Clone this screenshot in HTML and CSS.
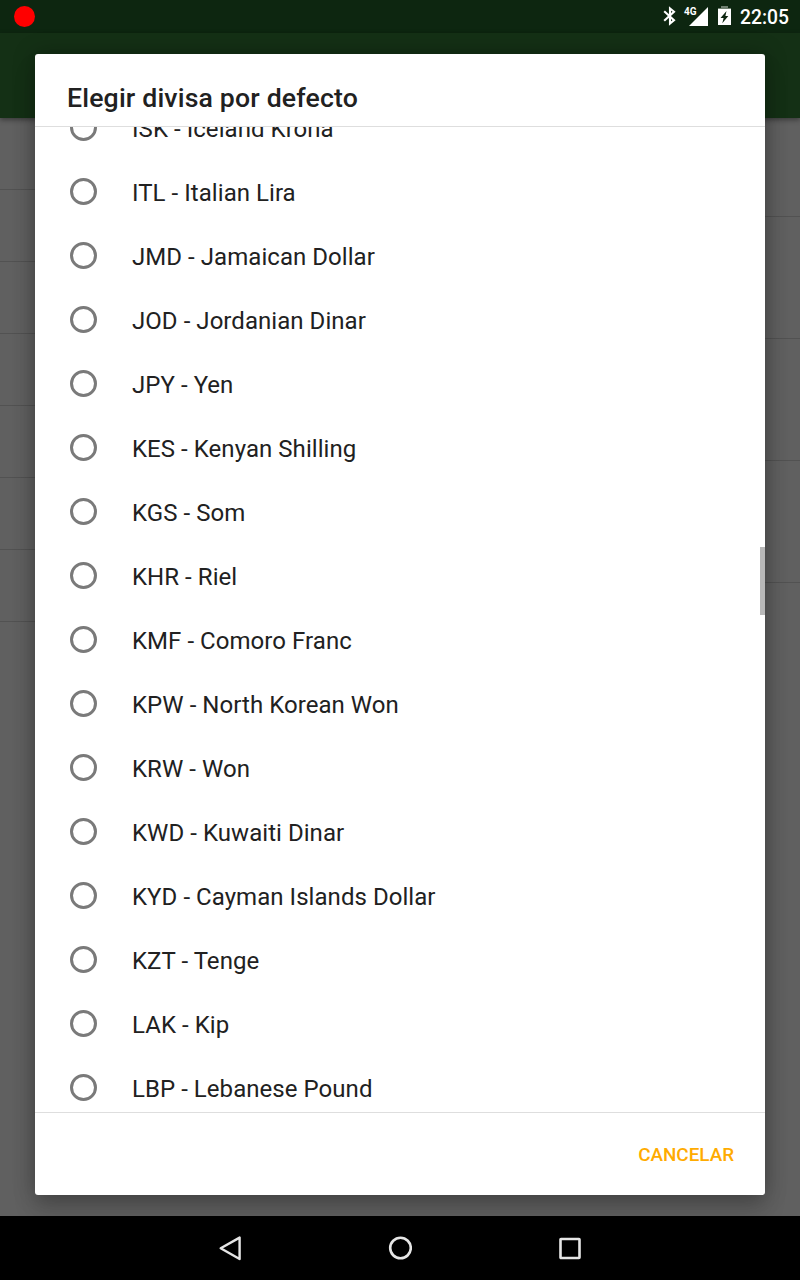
FILE: index.html
```html
<!DOCTYPE html>
<html lang="es">
<head>
<meta charset="utf-8">
<title>Elegir divisa por defecto</title>
<link rel="stylesheet" href="styles.css">
</head>
<body>
<div class="screen">
  <header class="status">
    <span class="record"></span>
    <div class="status-icons">
      <svg class="bluetooth" width="14" height="20" viewBox="0 0 14 20" fill="none" stroke="#fff" stroke-width="2.1"><path d="M1.2 5.2 11 14.3 7 17.6V2.4L11 5.7 1.2 14.8"/></svg>
      <span class="network">4G</span>
      <svg class="signal" width="19" height="19" viewBox="0 0 19 19"><path fill="#fff" d="M19 0v19H0z"/></svg>
      <svg class="battery" width="13" height="20" viewBox="0 0 13 20"><path fill="#6f7f70" d="M3 0h7v2h3v2H0V2h3z"/><path fill="#fff" d="M0 3h13v16H0z"/><path fill="#0d2610" d="M8.5 5 2.5 12H5.6L4.3 17.2 10.3 10H7.4z"/></svg>
      <span class="clock">22:05</span>
    </div>
  </header>
  <div class="toolbar"></div>
  <main class="backdrop">
    <div class="column column-left"><i></i><i></i><i></i><i></i><i></i><i></i><i></i></div>
    <div class="column column-right"><i></i><i></i><i></i><i></i></div>
  </main>
  <section class="dialog">
    <h1 class="title">Elegir divisa por defecto</h1>
    <div class="viewport">
      <ul class="list">
        <li><span class="radio"></span>ISK - Iceland Krona</li>
        <li><span class="radio"></span>ITL - Italian Lira</li>
        <li><span class="radio"></span>JMD - Jamaican Dollar</li>
        <li><span class="radio"></span>JOD - Jordanian Dinar</li>
        <li><span class="radio"></span>JPY - Yen</li>
        <li><span class="radio"></span>KES - Kenyan Shilling</li>
        <li><span class="radio"></span>KGS - Som</li>
        <li><span class="radio"></span>KHR - Riel</li>
        <li><span class="radio"></span>KMF - Comoro Franc</li>
        <li><span class="radio"></span>KPW - North Korean Won</li>
        <li><span class="radio"></span>KRW - Won</li>
        <li><span class="radio"></span>KWD - Kuwaiti Dinar</li>
        <li><span class="radio"></span>KYD - Cayman Islands Dollar</li>
        <li><span class="radio"></span>KZT - Tenge</li>
        <li><span class="radio"></span>LAK - Kip</li>
        <li><span class="radio"></span>LBP - Lebanese Pound</li>
      </ul>
      <span class="thumb"></span>
    </div>
    <footer class="actions"><button class="cancel">CANCELAR</button></footer>
  </section>
  <nav class="navbar">
    <svg width="24" height="28" viewBox="0 0 24 28" fill="none" stroke="#e6e6e6" stroke-width="2.4" stroke-linejoin="round"><path d="M21.6 3.6v21.4L2.7 14.3z"/></svg>
    <svg width="24" height="28" viewBox="0 0 24 28" fill="none" stroke="#e6e6e6" stroke-width="2.6"><circle cx="12.5" cy="14" r="10.3"/></svg>
    <svg width="24" height="28" viewBox="0 0 24 28" fill="none" stroke="#e6e6e6" stroke-width="2.6" stroke-linejoin="round"><rect x="2.5" y="5" width="19" height="19" rx="0.5"/></svg>
  </nav>
</div>
</body>
</html>
```
FILE: styles.css
```css
* { box-sizing: border-box; }
body { margin: 0; font-family: Roboto, "Liberation Sans", sans-serif; }
.screen {
  position: relative;
  display: flex;
  flex-direction: column;
  width: 800px;
  height: 1280px;
  overflow: hidden;
  background: #606060;
}
.status {
  display: flex;
  justify-content: space-between;
  height: 33px;
  padding: 6px 11px 0 13.5px;
  background: #0d2610;
}
.record { width: 21px; height: 21px; border-radius: 50%; background: #f00; }
.status-icons { display: flex; align-items: flex-start; color: #fff; }
.bluetooth { margin: 0 7px 0 0; }
.network { width: 5px; font-size: 10px; font-weight: 700; line-height: 11px; white-space: nowrap; }
.signal { margin: 1px 10px 0 0; }
.battery { margin-right: 9px; }
.clock { font-size: 19.3px; font-weight: 500; line-height: 23px; }
.toolbar { height: 85px; background: #143015; box-shadow: 0 2px 5px rgba(0, 0, 0, .4); z-index: 1; }
.backdrop { display: flex; justify-content: space-between; flex: 1; }
.column { width: 40px; }
.column i { display: block; border-bottom: 1px solid #525252; }
.column-left i { height: 72px; }
.column-right i { height: 122px; }
.column-right i:first-child { height: 99px; }
.dialog {
  position: absolute;
  z-index: 2;
  top: 54px;
  left: 35px;
  display: flex;
  flex-direction: column;
  width: 730px;
  height: 1141px;
  border-radius: 3px;
  background: #fff;
  box-shadow: 0 16px 22px rgba(0, 0, 0, .15), 0 0 22px rgba(0, 0, 0, .28);
}
.title {
  height: 73px;
  margin: 0;
  padding: 28px 32px 0;
  border-bottom: 1px solid #dedede;
  color: #212121;
  font-size: 26.67px;
  font-weight: 500;
  line-height: 32px;
  letter-spacing: .16px;
}
.viewport { position: relative; height: 985px; overflow: hidden; }
.list { margin: -31px 0 0; padding: 0; list-style: none; }
.list li {
  display: flex;
  align-items: center;
  gap: 35px;
  height: 64px;
  padding: 2px 35px 0;
  color: #212121;
  font-size: 24px;
  line-height: 28px;
  letter-spacing: .05px;
}
.radio { width: 27px; height: 27px; margin-bottom: 4px; border: 3px solid #7a7a7a; border-radius: 50%; }
.thumb { position: absolute; top: 420px; right: 0; width: 5px; height: 68px; background: #b8b8b8; }
.actions { display: flex; flex: 1; justify-content: flex-end; padding: 2px 31px 0; border-top: 1px solid #dedede; }
.cancel { padding: 0; border: 0; background: none; color: #ffab00; font: 500 18.85px Roboto, sans-serif; }
.navbar {
  z-index: 3;
  display: flex;
  justify-content: center;
  gap: 146px;
  height: 64px;
  padding: 18px 0 0;
  background: #000;
}
```
